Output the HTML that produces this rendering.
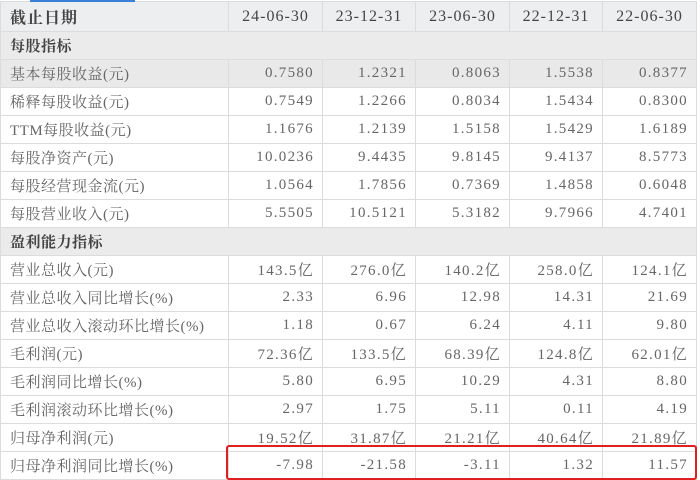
<!DOCTYPE html>
<html><head><meta charset="utf-8"><style>
body{margin:0;width:700px;height:480px;overflow:hidden;background:#fff;position:relative;font-family:"Liberation Serif","Noto Serif CJK SC",serif;}
table{border-collapse:collapse;position:absolute;left:0;top:1px;table-layout:fixed;width:696px;}
td{border:1px solid #dcdcdc;height:27px;padding:0 8px;font-size:15px;color:#666;text-align:right;white-space:nowrap;overflow:hidden;letter-spacing:1.3px;}
td:first-child{text-align:left;padding-left:9px;letter-spacing:0.5px;}
tr.h td{background:#edeef0;color:#444;text-align:center;font-size:16px;height:29px;letter-spacing:1px;}
tr.h td:first-child{text-align:left;font-weight:bold;}
tr.s td{background:#ebebeb;color:#444;font-weight:bold;}
tr.g td{background:#e9e9e9;}
.bar{position:absolute;left:30px;top:0;width:105px;height:2px;background:#3b7fd6;}
.box{position:absolute;left:226px;top:445px;width:467px;height:31px;border:2px solid #e02020;border-radius:3px;}
</style></head><body>
<table>
<colgroup><col style="width:228px"><col style="width:94px"><col style="width:93px"><col style="width:94px"><col style="width:93px"><col style="width:94px"></colgroup>
<tr class="h"><td>截止日期</td><td>24-06-30</td><td>23-12-31</td><td>23-06-30</td><td>22-12-31</td><td>22-06-30</td></tr>
<tr class="s"><td colspan="6">每股指标</td></tr>
<tr class="g"><td>基本每股收益(元)</td><td>0.7580</td><td>1.2321</td><td>0.8063</td><td>1.5538</td><td>0.8377</td></tr>
<tr><td>稀释每股收益(元)</td><td>0.7549</td><td>1.2266</td><td>0.8034</td><td>1.5434</td><td>0.8300</td></tr>
<tr><td>TTM每股收益(元)</td><td>1.1676</td><td>1.2139</td><td>1.5158</td><td>1.5429</td><td>1.6189</td></tr>
<tr><td>每股净资产(元)</td><td>10.0236</td><td>9.4435</td><td>9.8145</td><td>9.4137</td><td>8.5773</td></tr>
<tr><td>每股经营现金流(元)</td><td>1.0564</td><td>1.7856</td><td>0.7369</td><td>1.4858</td><td>0.6048</td></tr>
<tr><td>每股营业收入(元)</td><td>5.5505</td><td>10.5121</td><td>5.3182</td><td>9.7966</td><td>4.7401</td></tr>
<tr class="s"><td colspan="6">盈利能力指标</td></tr>
<tr><td>营业总收入(元)</td><td>143.5亿</td><td>276.0亿</td><td>140.2亿</td><td>258.0亿</td><td>124.1亿</td></tr>
<tr><td>营业总收入同比增长(%)</td><td>2.33</td><td>6.96</td><td>12.98</td><td>14.31</td><td>21.69</td></tr>
<tr><td>营业总收入滚动环比增长(%)</td><td>1.18</td><td>0.67</td><td>6.24</td><td>4.11</td><td>9.80</td></tr>
<tr><td>毛利润(元)</td><td>72.36亿</td><td>133.5亿</td><td>68.39亿</td><td>124.8亿</td><td>62.01亿</td></tr>
<tr><td>毛利润同比增长(%)</td><td>5.80</td><td>6.95</td><td>10.29</td><td>4.31</td><td>8.80</td></tr>
<tr><td>毛利润滚动环比增长(%)</td><td>2.97</td><td>1.75</td><td>5.11</td><td>0.11</td><td>4.19</td></tr>
<tr><td>归母净利润(元)</td><td>19.52亿</td><td>31.87亿</td><td>21.21亿</td><td>40.64亿</td><td>21.89亿</td></tr>
<tr><td>归母净利润同比增长(%)</td><td>-7.98</td><td>-21.58</td><td>-3.11</td><td>1.32</td><td>11.57</td></tr>
</table>
<div class="bar"></div>
<div class="box"></div>
</body></html>
